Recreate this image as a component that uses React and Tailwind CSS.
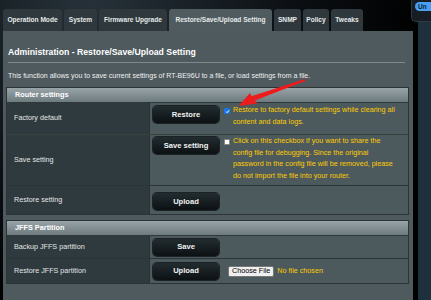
const TABS = [
  { label: 'Operation Mode', w: 'w-[59px]' },
  { label: 'System', w: 'w-[33px]' },
  { label: 'Firmware Upgrade', w: 'w-[68px]' },
  { label: 'Restore/Save/Upload Setting', w: 'w-[103px]', active: true },
  { label: 'SNMP', w: 'w-[27px]' },
  { label: 'Policy', w: 'w-[26px]' },
  { label: 'Tweaks', w: 'w-[32px]' },
]

function Btn({ children }) {
  return (
    <div className="w-[66px] h-[17px] shrink-0 rounded-[4px] bg-[linear-gradient(#222c30,#0c1113)] flex items-center justify-center text-[7.6px] font-bold text-[#f2f2f2] shadow-[0_0_0_1px_#1a2225]">
      {children}
    </div>
  )
}

function Header({ children }) {
  return (
    <div className="h-[15px] flex items-center pl-[8px] bg-[linear-gradient(#98a4a8,#6d7a7e)] border-b border-[#2f383b] text-[7.3px] font-bold text-white">
      {children}
    </div>
  )
}

export default function App() {
  return (
    <div className="relative w-[431px] h-[300px] overflow-hidden bg-black flex font-['Liberation_Sans',Arial,sans-serif]">
      {/* main column */}
      <div className="w-[413px] shrink-0 flex flex-col pl-[3px] pt-[9px] bg-[radial-gradient(circle_at_90px_-10px,#27323a_0%,#0c1014_45%,#000_75%)]">
        {/* tabs */}
        <div className="flex gap-[2px] h-[22px]">
          {TABS.map(t => (
            <div key={t.label}
              className={`${t.w} h-full rounded-t-[3px] flex items-center justify-center whitespace-nowrap text-[6.6px] font-bold text-[#e4e8e9] ${t.active ? 'bg-[#4f5b5f]' : 'bg-[#2f393d]'}`}>
              {t.label}
            </div>
          ))}
        </div>

        {/* panel */}
        <div className="w-[410px] flex-1 bg-[#4e5a5e] flex flex-col">
          <div className="pl-[5px] pt-[16px] text-[8.7px] leading-[10px] font-bold text-white">
            Administration - Restore/Save/Upload Setting
          </div>
          <div className="ml-[5px] mt-[5px] w-[397px] h-px bg-[#7d898d]" />
          <div className="pl-[5px] mt-[8px] text-[7px] leading-[9px] text-[#eef0f0] whitespace-nowrap">
            This function allows you to save current settings of RT-BE96U to a file, or load settings from a file.
          </div>

          {/* router settings */}
          <div className="ml-[3px] mt-[7px] w-[403px] border border-[#2c3437] bg-[#4c5a5e]">
            <Header>Router settings</Header>
            <div className="flex h-[32px] border-b border-[#38433f]">
              <div className="w-[142px] shrink-0 bg-[#2f3a3e] flex items-center pl-[7px] text-[7.2px] text-[#e2e6e7]">Factory default</div>
              <div className="flex-1 flex items-start pt-[3px] pl-[3px] gap-[5px] border-l border-[#2a3235]">
                <Btn>Restore</Btn>
                <div className="flex items-start gap-[3px] pt-[1px]">
                  <div className="mt-[1px] w-[6px] h-[6px] rounded-[1px] bg-[#1a73e8] flex items-center justify-center">
                    <svg width="5" height="5" viewBox="0 0 10 10"><path d="M2 5.2 L4.2 7.4 L8.2 2.6" fill="none" stroke="#fff" strokeWidth="2" /></svg>
                  </div>
                  <div className="text-[7.2px] leading-[12px] text-[#ffcc00] whitespace-nowrap -mt-[3px]">
                    <div>Restore to factory default settings while clearing all</div>
                    <div>content and data logs.</div>
                  </div>
                </div>
              </div>
            </div>
            <div className="flex h-[51px] border-b border-[#2c3437]">
              <div className="w-[142px] shrink-0 bg-[#2f3a3e] flex items-center pl-[7px] text-[7.2px] text-[#e2e6e7]">Save setting</div>
              <div className="flex-1 flex items-start pt-[2px] pl-[3px] gap-[5px] border-l border-[#2a3235]">
                <Btn>Save setting</Btn>
                <div className="flex items-start gap-[3px] pt-[1px]">
                  <div className="mt-[1px] w-[6px] h-[6px] rounded-[1px] bg-white border border-[#888]" />
                  <div className="text-[7.2px] leading-[11.7px] text-[#ffcc00] whitespace-nowrap -mt-[3px]">
                    <div>Click on this checkbox if you want to share the</div>
                    <div>config file for debugging. Since the original</div>
                    <div>password in the config file will be removed, please</div>
                    <div>do not import the file into your router.</div>
                  </div>
                </div>
              </div>
            </div>
            <div className="flex h-[28px]">
              <div className="w-[142px] shrink-0 bg-[#2f3a3e] flex items-center pl-[7px] text-[7.2px] text-[#e2e6e7]">Restore setting</div>
              <div className="flex-1 flex items-center pt-[3px] pl-[3px] border-l border-[#2a3235]">
                <Btn>Upload</Btn>
              </div>
            </div>
          </div>

          {/* JFFS */}
          <div className="ml-[3px] mt-[5px] w-[403px] border border-[#2c3437] bg-[#4c5a5e]">
            <Header>JFFS Partition</Header>
            <div className="flex h-[23px] border-b border-[#2c3437]">
              <div className="w-[142px] shrink-0 bg-[#2f3a3e] flex items-center pl-[7px] text-[7.2px] text-[#e2e6e7]">Backup JFFS partition</div>
              <div className="flex-1 flex items-center pl-[3px] border-l border-[#2a3235]">
                <Btn>Save</Btn>
              </div>
            </div>
            <div className="flex h-[24px]">
              <div className="w-[142px] shrink-0 bg-[#2f3a3e] flex items-center pl-[7px] text-[7.2px] text-[#e2e6e7]">Restore JFFS partition</div>
              <div className="flex-1 flex items-center pl-[3px] border-l border-[#2a3235]">
                <Btn>Upload</Btn>
                <div className="ml-[9px] h-[11px] px-[3px] flex items-center bg-[#efefef] border border-[#767676] rounded-[2px] text-[7.2px] text-black">Choose File</div>
                <div className="ml-[3px] text-[7.2px] text-[#ffcc00]">No file chosen</div>
              </div>
            </div>
          </div>
        </div>
      </div>

      <div className="w-[5px] shrink-0 bg-black" />
      <div className="flex-1 mt-[22px] bg-[#1d303c]" />

      {/* top-right widget */}
      <div className="absolute right-0 top-0 w-[20px] h-[22px] rounded-bl-[5px] bg-[#161e24] border-l border-b border-[#2b3a44]">
        <div className="absolute left-[3px] top-[2px] w-[30px] h-[9px] rounded-full bg-[#4a9ff5] text-[6.5px] font-bold text-[#0c1a2a] pl-[3px] leading-[9px]">Un</div>
      </div>

      {/* red arrow */}
      <svg className="absolute left-0 top-0" width="431" height="300" viewBox="0 0 431 300">
        <polygon points="238.5,106 250,93 251.5,96.3 305,79 305.4,81 254.8,100.6 257.5,103.5" fill="#ec1c1c" />
      </svg>
    </div>
  )
}
